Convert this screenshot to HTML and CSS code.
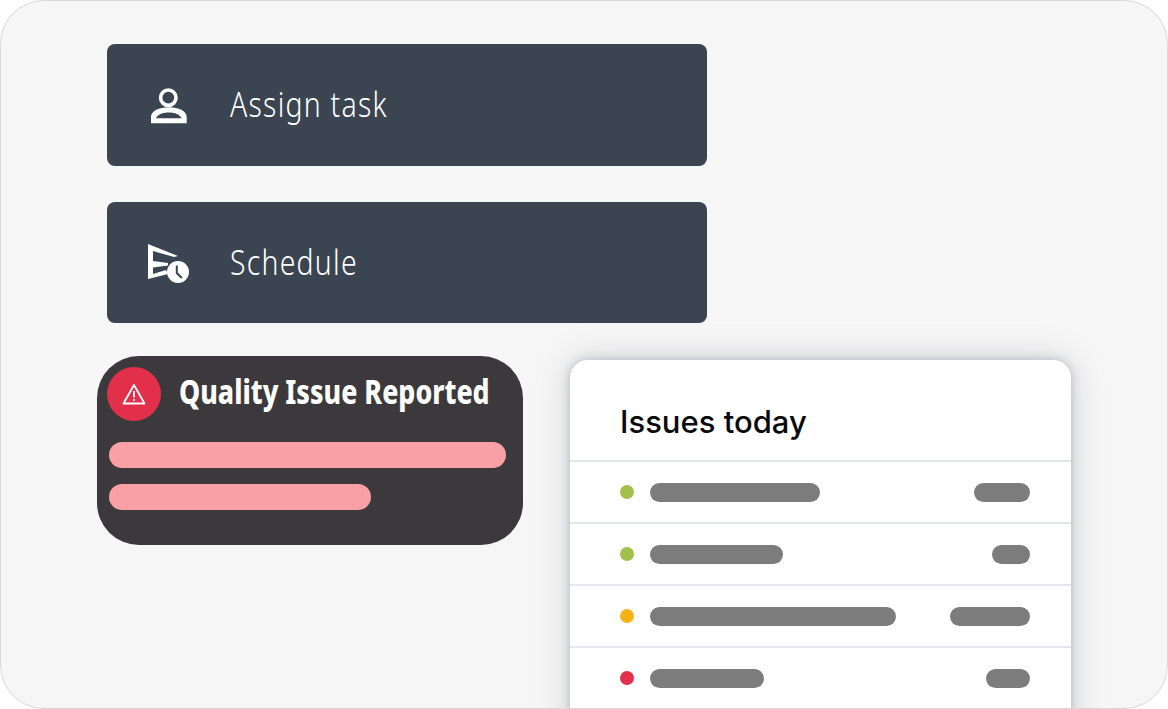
FILE: index.html
```html
<!DOCTYPE html>
<html lang="en">
<head>
<meta charset="utf-8">
<title>Issues</title>
<link rel="stylesheet" href="styles.css">
</head>
<body>
<main class="stage">
  <div class="action">
    <svg class="action-icon" viewBox="0 0 44 40" aria-hidden="true">
      <circle cx="21.300" cy="12.700" r="7.700" fill="none" stroke="#fff" stroke-width="3.600"/>
      <path d="M4 38.300V32C4 26 12 22.300 21.800 22.300S39.700 26 39.700 32v6.300zM8.700 33.300H34.700C33 29.500 28 27.400 21.800 27.400S10.500 29.500 8.700 33.300z" fill="#fff" fill-rule="evenodd"/>
    </svg>
    <span class="action-label">Assign task</span>
  </div>
  <div class="action action-second">
    <svg class="action-icon" viewBox="0 0 44 40" aria-hidden="true">
      <path d="M1 1L31 13 27 14 6 8v10l15 2v2.500L6 24.500v6.500L19 27 21 31 1 36z" fill="#fff"/>
      <circle cx="31" cy="29" r="11" fill="#fff"/>
      <path d="M29.800 22.500v7.500l5 5" fill="none" stroke="#3b4552" stroke-width="2"/>
    </svg>
    <span class="action-label">Schedule</span>
  </div>
  <div class="lower">
    <section class="alert">
      <div class="alert-head">
        <span class="alert-badge">
          <svg class="alert-icon" viewBox="0 0 24 22" aria-hidden="true">
            <path d="M12 2L22.500 20.500H1.500z" fill="none" stroke="#fff" stroke-width="1.800" stroke-linejoin="round"/>
            <path d="M12 8v6.500M12 16v2" fill="none" stroke="#fff" stroke-width="1.800"/>
          </svg>
        </span>
        <h2 class="alert-title">Quality Issue Reported</h2>
      </div>
      <div class="pill pill-long"></div>
      <div class="pill pill-short"></div>
    </section>
    <section class="card">
      <h2 class="card-title">Issues today</h2>
      <div class="row">
        <span class="dot dot-green"></span>
        <span class="bar bar-1a"></span>
        <span class="bar bar-1b"></span>
      </div>
      <div class="row">
        <span class="dot dot-green"></span>
        <span class="bar bar-2a"></span>
        <span class="bar bar-2b"></span>
      </div>
      <div class="row">
        <span class="dot dot-amber"></span>
        <span class="bar bar-3a"></span>
        <span class="bar bar-3b"></span>
      </div>
      <div class="row">
        <span class="dot dot-red"></span>
        <span class="bar bar-4a"></span>
        <span class="bar bar-4b"></span>
      </div>
    </section>
  </div>
</main>
</body>
</html>
```
FILE: styles.css
```css
* { box-sizing: border-box; }
html, body { margin: 0; padding: 0; background: #fff; }
.stage {
  width: 1168px;
  height: 709px;
  padding: 43px 0 0 106px;
  background: #f6f6f6;
  border: 1px solid #d8d8d8;
  border-radius: 44px;
  overflow: hidden;
}
.action {
  width: 600px;
  height: 122px;
  display: flex;
  align-items: center;
  padding-left: 40px;
  background: #3b4552;
  border-radius: 8px;
  color: #fff;
}
.action-second { margin-top: 36px; height: 121px; }
.action-icon { width: 44px; height: 40px; flex: none; }
.action-label {
  display: inline-block;
  margin: 0 0 2px 39px;
  font-family: "Noto Sans", sans-serif;
  font-weight: 300;
  font-size: 34px;
  letter-spacing: 1.500px;
  line-height: 40px;
  transform: scaleX(.835);
  transform-origin: left center;
}
.lower {
  display: flex;
  align-items: flex-start;
  margin: 33px 0 0 -10px;
}
.alert {
  width: 426px;
  height: 189px;
  flex: none;
  padding: 11px 17px 0 10px;
  background: #3c393c;
  border-radius: 42px;
}
.alert-head { display: flex; align-items: center; }
.alert-badge {
  width: 54px;
  height: 54px;
  flex: none;
  display: flex;
  align-items: center;
  justify-content: center;
  background: #e2304b;
  border-radius: 50%;
}
.alert-icon { width: 24px; height: 22px; }
.alert-title {
  margin: 0 0 4px 18px;
  font-family: "Noto Sans", sans-serif;
  font-size: 33px;
  font-weight: 800;
  line-height: 40px;
  color: #fff;
  white-space: nowrap;
  transform: scaleX(.81);
  transform-origin: left center;
}
.pill {
  height: 26px;
  margin-left: 2px;
  background: #f9a0a7;
  border-radius: 13px;
}
.pill-long { width: 397px; margin-top: 21px; }
.pill-short { width: 262px; margin-top: 16px; }
.card {
  width: 501px;
  height: 420px;
  flex: none;
  margin: 4px 0 0 47px;
  background: #fff;
  border-radius: 18px;
  box-shadow: 0 0 10px rgba(120, 123, 140, .42), 0 0 34px rgba(130, 133, 150, .32);
}
.card-title {
  height: 100px;
  margin: 0;
  padding: 42px 0 0 50px;
  font-family: Inter, sans-serif;
  font-size: 31px;
  font-weight: 500;
  line-height: 40px;
  color: #0a0a0a;
}
.row {
  height: 62px;
  display: flex;
  align-items: center;
  padding: 0 41px 0 50px;
  border-top: 2px solid #e4e6ef;
}
.dot { width: 14px; height: 14px; flex: none; border-radius: 50%; margin-right: 16px; }
.dot-green { background: #a2c14a; }
.dot-amber { background: #f5b316; }
.dot-red { background: #e2304b; }
.bar { height: 19px; flex: none; background: #7c7c7c; border-radius: 9.500px; }
.bar:last-child { margin-left: auto; }
.bar-1a { width: 170px; }
.bar-1b { width: 56px; }
.bar-2a { width: 133px; }
.bar-2b { width: 38px; }
.bar-3a { width: 246px; }
.bar-3b { width: 80px; }
.bar-4a { width: 114px; }
.bar-4b { width: 44px; }
```
